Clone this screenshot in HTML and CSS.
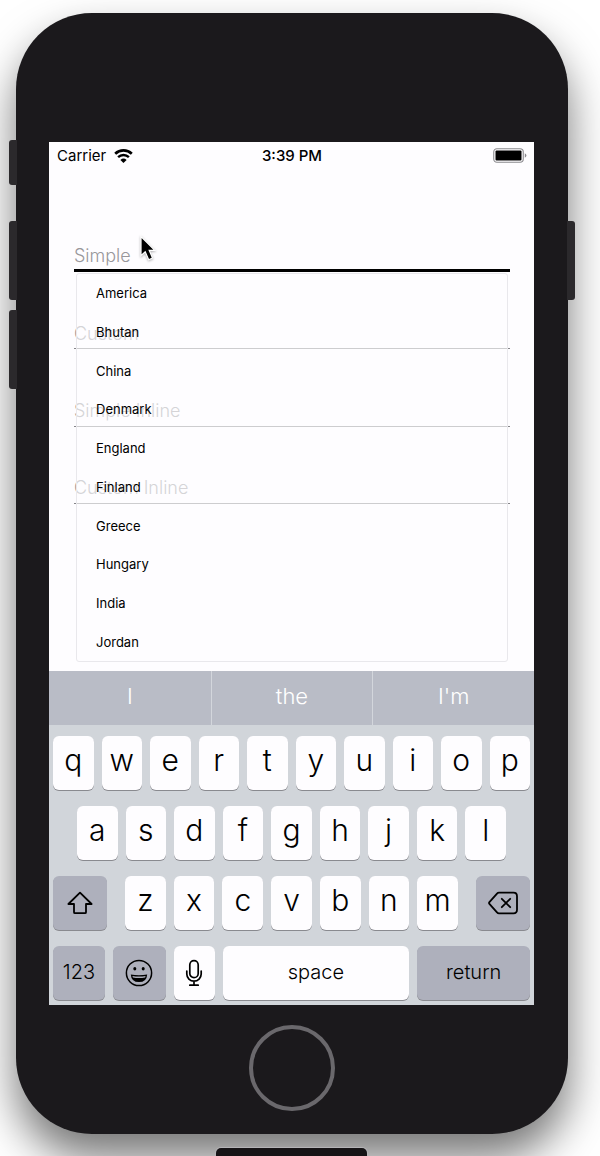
FILE: index.html
```html
<!DOCTYPE html>
<html lang="en">
<head>
<meta charset="utf-8">
<meta name="viewport" content="width=device-width, initial-scale=1">
<title>Country picker</title>
<link rel="stylesheet" href="styles.css">
</head>
<body>
<main class="stage">
  <div class="phone">
    <span class="side-button mute"></span>
    <span class="side-button volume-up"></span>
    <span class="side-button volume-down"></span>
    <span class="side-button power"></span>

    <div class="screen">
      <header class="status-bar">
        <div class="carrier">
          <span>Carrier</span>
          <svg class="wifi" viewBox="0 0 19 14" aria-hidden="true">
            <path d="M1.2 4.8a12 12 0 0 1 16.6 0" fill="none" stroke="#000" stroke-width="2.7"/>
            <path d="M4.1 8.2a7.8 7.8 0 0 1 10.8 0" fill="none" stroke="#000" stroke-width="2.4"/>
            <path d="M6.4 11a4.5 4.5 0 0 1 6.2 0L9.5 13.9z"/>
          </svg>
        </div>
        <time class="clock">3:39 PM</time>
        <svg class="battery" viewBox="0 0 34 16" aria-label="Battery full">
          <rect x="0.75" y="0.75" width="29.5" height="13.5" rx="3.2" fill="none" stroke="#8b8a8e" stroke-width="1.1"/>
          <rect x="2.5" y="2.5" width="26" height="10" rx="1" fill="#000"/>
          <path d="M31.8 5.2q1.6 .7 1.6 2.3t-1.6 2.3z" fill="#8b8a8e"/>
        </svg>
      </header>

      <form class="form">
        <input class="field active" type="text" placeholder="Simple" aria-label="Simple">
        <div class="more-fields">
          <input class="field" type="text" placeholder="Custom" aria-label="Custom">
          <input class="field" type="text" placeholder="Simple Inline" aria-label="Simple Inline">
          <input class="field" type="text" placeholder="Custom Inline" aria-label="Custom Inline">
          <ul class="suggestions">
            <li>America</li>
            <li>Bhutan</li>
            <li>China</li>
            <li>Denmark</li>
            <li>England</li>
            <li>Finland</li>
            <li>Greece</li>
            <li>Hungary</li>
            <li>India</li>
            <li>Jordan</li>
          </ul>
        </div>
        <svg class="cursor" viewBox="0 0 18 28" aria-hidden="true">
          <path d="M2 1.5v19.2l4.2-4 3.5 8 3.8-1.7-3.3-7.7h5.6z" fill="#000" stroke="#fff" stroke-width="1.2"/>
        </svg>
      </form>

      <div class="predictions">
        <button type="button">I</button>
        <button type="button">the</button>
        <button type="button">I'm</button>
      </div>

      <div class="keyboard">
        <div class="row">
          <button class="key">q</button><button class="key">w</button><button class="key">e</button><button class="key">r</button><button class="key">t</button><button class="key">y</button><button class="key">u</button><button class="key">i</button><button class="key">o</button><button class="key">p</button>
        </div>
        <div class="row inset">
          <button class="key">a</button><button class="key">s</button><button class="key">d</button><button class="key">f</button><button class="key">g</button><button class="key">h</button><button class="key">j</button><button class="key">k</button><button class="key">l</button>
        </div>
        <div class="row shift-row">
          <button class="key dark" aria-label="Shift">
            <svg class="icon-shift" viewBox="0 0 26 24" aria-hidden="true">
              <path d="M13 1.6 24.6 13H19v8.2q0 1-1 1H8q-1 0-1-1V13H1.4z" fill="none" stroke="#000" stroke-width="1.8" stroke-linejoin="round"/>
            </svg>
          </button>
          <div class="row">
            <button class="key">z</button><button class="key">x</button><button class="key">c</button><button class="key">v</button><button class="key">b</button><button class="key">n</button><button class="key">m</button>
          </div>
          <button class="key dark" aria-label="Delete">
            <svg class="icon-delete" viewBox="0 0 30 24" aria-hidden="true">
              <g fill="none" stroke="#000" stroke-width="1.8" stroke-linejoin="round" stroke-linecap="round">
                <path d="M11 1.7h14.5q3.5 0 3.5 3.5v13.6q0 3.5-3.5 3.5H11q-1.2 0-2-.9L1.4 12.8q-.7-.8 0-1.6L9 2.6q.8-.9 2-.9z"/>
                <path d="m13.8 7.8 8.4 8.4m0-8.4-8.4 8.4"/>
              </g>
            </svg>
          </button>
        </div>
        <div class="row bottom-row">
          <button class="key dark word">123</button>
          <button class="key dark" aria-label="Emoji">
            <svg class="icon-emoji" viewBox="0 0 28 28" aria-hidden="true">
              <circle cx="14" cy="14" r="12.6" fill="none" stroke="#000" stroke-width="1.5"/>
              <ellipse cx="9.8" cy="9.7" rx="1.5" ry="1.8"/>
              <ellipse cx="18.2" cy="9.7" rx="1.5" ry="1.8"/>
              <path d="M5.8 15.4q8.2 1.6 16.4 0-.5 7.6-8.2 7.6t-8.2-7.6z"/>
              <path d="M7.4 16.9q6.6 1.2 13.2 0l-.5 1.5q-6.1 1-12.2 0z" fill="#aeb0bc"/>
            </svg>
          </button>
          <button class="key" aria-label="Dictate">
            <svg class="icon-mic" viewBox="0 0 18 28" aria-hidden="true">
              <g fill="none" stroke="#000" stroke-width="1.7" stroke-linecap="round">
                <rect x="4.8" y="1.6" width="8.4" height="17" rx="4.2"/>
                <path d="M1.8 12v3a7.2 7.2 0 0 0 14.4 0v-3M9 22.4v3.8M4.8 26.2h8.4"/>
              </g>
            </svg>
          </button>
          <button class="key word">space</button>
          <button class="key dark word">return</button>
        </div>
      </div>
    </div>

    <button class="home" aria-label="Home"></button>
  </div>
</main>
<footer class="desk"><span class="dock"></span></footer>
</body>
</html>
```
FILE: styles.css
```css
* {
  box-sizing: border-box;
}

body {
  margin: 0;
  min-height: 100vh;
  display: flex;
  flex-direction: column;
  overflow: hidden;
  background: #fff;
  color: #000;
  font-family: Inter, "Liberation Sans", sans-serif;
}

button,
input {
  margin: 0;
  padding: 0;
  border: 0;
  border-radius: 0;
  background: none;
  color: inherit;
  font: inherit;
}

svg {
  display: block;
}

.stage {
  padding: 13px 32px 14px 16px;
}

.phone {
  position: relative;
  display: flex;
  flex-direction: column;
  padding: 129px 34px 23px 33px;
  border-radius: 76px;
  background: #1b191c;
  box-shadow: 0 24px 44px rgba(0, 0, 0, 0.54);
}

/* Hardware buttons sit over the edge of the body */
.side-button {
  position: absolute;
  left: -7px;
  width: 8px;
  height: 79px;
  border-radius: 3px 0 0 3px;
  background: #2b292c;
}

.mute {
  top: 127px;
  height: 45px;
}

.volume-up {
  top: 208px;
}

.volume-down {
  top: 297px;
}

.power {
  top: 208px;
  left: auto;
  right: -7px;
  border-radius: 0 3px 3px 0;
}

.screen {
  background: #fefdff;
}

.status-bar {
  display: grid;
  grid-template-columns: 1fr auto 1fr;
  align-items: center;
  height: 27px;
  padding: 0 7px 0 8px;
  font-size: 15px;
}

.carrier {
  display: flex;
  align-items: center;
  gap: 8px;
}

.wifi {
  width: 19px;
  height: 14px;
}

.clock {
  font-weight: 500;
}

.battery {
  width: 34px;
  height: 16px;
  justify-self: end;
}

.form {
  position: relative;
  padding: 72px 24px 0 25px;
  height: 502px;
}

.field {
  display: block;
  width: 100%;
  padding-top: 46px;
  border-bottom: 1px solid #858488;
  outline: none;
  font-size: 18px;
  font-weight: 300;
}

.field::placeholder {
  color: #98979b;
  opacity: 1;
}

.field.active {
  height: 31px;
  padding: 0;
  border-bottom: 3px solid #000;
}

.more-fields {
  position: relative;
  display: grid;
  grid-template-rows: repeat(3, 1fr);
  height: 232px;
}

/* Translucent list covering the remaining fields */
.suggestions {
  position: absolute;
  top: 1px;
  left: 2px;
  right: 2px;
  display: grid;
  grid-template-rows: repeat(10, 1fr);
  align-items: center;
  height: 389px;
  margin: 0;
  padding: 0 19px;
  list-style: none;
  border: 1px solid #e9e8ec;
  border-radius: 3px;
  background: rgba(254, 253, 255, 0.6);
  font-size: 13px;
}

.cursor {
  position: absolute;
  top: 66px;
  left: 90px;
  width: 18px;
  height: 28px;
  filter: drop-shadow(0 1px 1px rgba(0, 0, 0, 0.3));
}

.predictions {
  display: grid;
  grid-template-columns: repeat(3, 1fr);
  height: 54px;
  background: #b9bcc6;
}

.predictions button {
  padding-bottom: 4px;
  color: #fff;
  font-size: 22px;
  font-weight: 300;
}

.predictions button + button {
  border-left: 1px solid #d3d6dc;
}

.keyboard {
  display: flex;
  flex-direction: column;
  gap: 16px;
  padding: 11px 4px 5px;
  background: #d1d5da;
}

.row {
  display: grid;
  grid-auto-flow: column;
  grid-auto-columns: minmax(0, 1fr);
  gap: 8px;
}

.inset {
  padding: 0 24px;
}

.shift-row {
  grid-template-columns: 54fr 333fr 54fr;
  gap: 18px;
}

.bottom-row {
  grid-template-columns: 52fr 53fr 41fr 187fr 113fr;
}

.key {
  display: flex;
  align-items: center;
  justify-content: center;
  height: 54px;
  padding-bottom: 6px;
  border-radius: 6px;
  background: #fefdff;
  box-shadow: 0 1px 0 #898a8f;
  font-size: 30px;
  font-weight: 300;
}

.key.dark {
  background: #aeb0bc;
}

.key.word {
  padding-bottom: 2px;
  font-size: 20px;
}

.key[aria-label] {
  padding: 0;
}

.icon-shift {
  width: 26px;
  height: 24px;
}

.icon-delete {
  width: 30px;
  height: 24px;
}

.icon-emoji {
  width: 28px;
  height: 28px;
}

.icon-mic {
  width: 18px;
  height: 28px;
}

.home {
  align-self: center;
  width: 86px;
  height: 86px;
  margin-top: 20px;
  border: 4px solid #6a686c;
  border-radius: 50%;
}

.desk {
  position: relative;
  display: flex;
  justify-content: center;
  padding-right: 17px;
  border-bottom: 1px solid #68676a;
}

.dock {
  width: 151px;
  height: 8px;
  border-radius: 5px 5px 0 0;
  background: #161416;
  box-shadow: 0 0 0 1px #b5b4b7;
}
```
